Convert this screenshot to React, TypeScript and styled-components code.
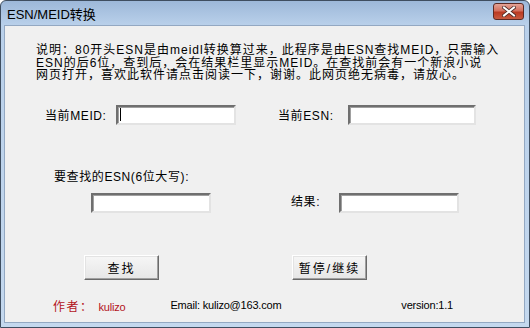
import React from "react";
import styled, { createGlobalStyle } from "styled-components";

const Global = createGlobalStyle`
  html, body { margin: 0; padding: 0; }
  body {
    width: 530px; height: 328px; overflow: hidden;
    background: #ffffff;
    font-family: "Liberation Sans", "Noto Sans CJK SC", sans-serif;
  }
`;

const Window = styled.div`
  box-sizing: border-box;
  width: 530px;
  height: 328px;
  border: 1px solid #3f4e60;
  border-radius: 6px 6px 0 0;
  background: linear-gradient(to bottom, #9db8d9 0px, #b9d0ea 24px, #c4d8ee 100%);
  display: flex;
  flex-direction: column;
`;

const TitleBar = styled.div`
  height: 24px;
  flex: none;
  display: flex;
  align-items: center;
  justify-content: space-between;
  padding: 0 5px 0 6px;
`;

const Title = styled.span`
  font-family: "Liberation Sans", "Noto Sans CJK SC", sans-serif;
  font-size: 13px;
  color: #000;
`;

const CloseButton = styled.div`
  box-sizing: border-box;
  width: 31px;
  height: 17px;
  margin-top: -3px;
  border: 1px solid #5c2a24;
  border-radius: 3px;
  background: linear-gradient(to bottom, #e4a396 0%, #d4705e 45%, #bb3a22 55%, #c85a40 100%);
  display: flex;
  align-items: center;
  justify-content: center;
`;

const Client = styled.div`
  flex: 1;
  margin: 0 4px 4px 3px;
  background: #f0f0f0;
  border: 1px solid #93a8c2;
  display: flex;
  flex-direction: column;
  font-family: "Liberation Sans", "Noto Sans CJK SC", sans-serif;
  font-size: 12px;
  color: #000;
`;

const Description = styled.div`
  margin: 18px 0 0 31px;
  line-height: 12.5px;
  letter-spacing: 1px;
  white-space: nowrap;
`;

const Row = styled.div<{ $top: number; $left: number; $bottom?: boolean }>`
  display: flex;
  align-items: ${(p) => (p.$bottom ? "flex-end" : "center")};
  margin-top: ${(p) => p.$top}px;
  padding-left: ${(p) => p.$left}px;
`;

const Label = styled.span<{ $width?: number; $gap?: number; $lift?: number }>`
  display: inline-block;
  width: ${(p) => (p.$width ? `${p.$width}px` : "auto")};
  margin-left: ${(p) => p.$gap ?? 0}px;
  margin-bottom: ${(p) => p.$lift ?? 0}px;
  letter-spacing: 0.6px;
  white-space: nowrap;
`;

const Input = styled.div<{ $width: number; $gap?: number; $top?: number }>`
  box-sizing: border-box;
  width: ${(p) => p.$width}px;
  height: 20px;
  margin-left: ${(p) => p.$gap ?? 0}px;
  margin-top: ${(p) => p.$top ?? 0}px;
  background: #ffffff;
  border-top: 2px solid #6f6f6f;
  border-left: 2px solid #6f6f6f;
  border-right: 2px solid #e3e3e3;
  border-bottom: 2px solid #e3e3e3;
  box-shadow: inset 1px 1px 0 #a0a0a0;
  display: flex;
  align-items: center;
  padding-left: 2px;
`;

const Caret = styled.span`
  width: 1px;
  height: 13px;
  background: #000;
`;

const SearchBlock = styled.div`
  display: flex;
  flex-direction: column;
`;

const Button = styled.div<{ $gap?: number }>`
  box-sizing: border-box;
  width: 75px;
  height: 25px;
  margin-left: ${(p) => p.$gap ?? 0}px;
  background: linear-gradient(to bottom, #f6f6f6, #e6e6e6);
  border-top: 1px solid #ffffff;
  border-left: 1px solid #ffffff;
  border-right: 1px solid #6a6a6a;
  border-bottom: 1px solid #6a6a6a;
  box-shadow: inset -1px -1px 0 #a0a0a0, inset 1px 1px 0 #e3e3e3;
  display: flex;
  align-items: center;
  justify-content: center;
  font-size: 12px;
  letter-spacing: 2px;
`;

const FooterText = styled.span<{ $left: number; $red?: boolean }>`
  margin-left: ${(p) => p.$left}px;
  color: ${(p) => (p.$red ? "#b3141c" : "#000")};
  white-space: nowrap;
  font-size: 11px;
  letter-spacing: -0.2px;
`;

const AuthorLabel = styled.span`
  font-size: 12px;
  letter-spacing: 1.5px;
  margin-right: 5px;
`;

export default function App() {
  return (
    <>
      <Global />
      <Window>
        <TitleBar>
          <Title>ESN/MEID转换</Title>
          <CloseButton>
            <svg width="14" height="11" viewBox="0 0 14 11">
              <path d="M2 1.5 L12 9.5 M12 1.5 L2 9.5" stroke="#4a2a26" strokeWidth="3.6" strokeLinecap="square" />
              <path d="M2 1.5 L12 9.5 M12 1.5 L2 9.5" stroke="#ffffff" strokeWidth="2" strokeLinecap="square" />
            </svg>
          </CloseButton>
        </TitleBar>
        <Client>
          <Description>
            说明：80开头ESN是由meidl转换算过来，此程序是由ESN查找MEID，只需输入
            <br />
            ESN的后6位，查到后，会在结果栏里显示MEID。在查找前会有一个新浪小说
            <br />
            网页打开，喜欢此软件请点击阅读一下，谢谢。此网页绝无病毒，请放心。
          </Description>
          <Row $top={23} $left={40}>
            <Label $width={71}>当前MEID:</Label>
            <Input $width={120}>
              <Caret />
            </Input>
            <Label $width={70} $gap={42}>当前ESN:</Label>
            <Input $width={128} />
          </Row>
          <Row $top={42} $left={49} $bottom>
            <SearchBlock>
              <Label>要查找的ESN(6位大写):</Label>
              <Input $width={120} $gap={37} $top={9} />
            </SearchBlock>
            <Label $width={48} $gap={80} $lift={4}>结果:</Label>
            <Input $width={120} />
          </Row>
          <Row $top={42} $left={79}>
            <Button>查找</Button>
            <Button $gap={133}>暂停/继续</Button>
          </Row>
          <Row $top={17} $left={0}>
            <FooterText $left={48} $red>
              <AuthorLabel>作者：</AuthorLabel>kulizo
            </FooterText>
            <FooterText $left={45}>Email: kulizo@163.com</FooterText>
            <FooterText $left={120}>version:1.1</FooterText>
          </Row>
        </Client>
      </Window>
    </>
  );
}
